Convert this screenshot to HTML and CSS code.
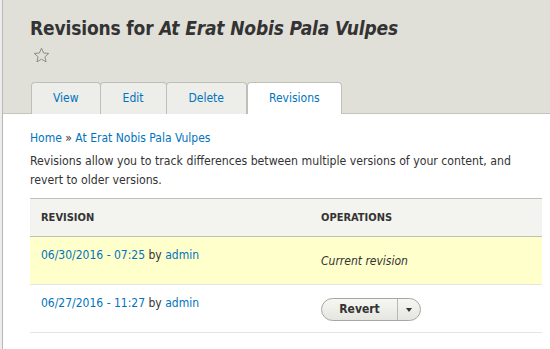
FILE: index.html
```html
<!DOCTYPE html>
<html lang="en">
<head>
    <meta charset="UTF-8">
    <meta name="viewport" content="width=device-width, initial-scale=1.0">
    <title>Revisions for At Erat Nobis Pala Vulpes</title>
    <link rel="stylesheet" href="styles.css">
</head>
<body>
<div class="page">

    <header class="page-header">
        <h1>Revisions for <em>At Erat Nobis Pala Vulpes</em></h1>
        <div class="shortcut">
            <svg width="17" height="17" viewBox="0 0 17 17">
                <path d="M8.5 1.2 L10.6 6 L15.8 6.4 L11.9 9.8 L13.1 14.9 L8.5 12.2 L3.9 14.9 L5.1 9.8 L1.2 6.4 L6.4 6 Z" fill="none" stroke="#8e8e82" stroke-width="1" stroke-linejoin="round"/>
            </svg>
        </div>
        <ul class="tabs">
            <li><a href="#">View</a></li>
            <li><a href="#">Edit</a></li>
            <li><a href="#">Delete</a></li>
            <li class="active"><a href="#">Revisions</a></li>
        </ul>
    </header>

    <main class="content">
        <div class="breadcrumb"><a href="#">Home</a> » <a href="#">At Erat Nobis Pala Vulpes</a></div>
        <p class="help">Revisions allow you to track differences between multiple versions of your content, and revert to older versions.</p>

        <table class="revisions">
            <thead>
                <tr>
                    <th class="col-rev">Revision</th>
                    <th>Operations</th>
                </tr>
            </thead>
            <tbody>
                <tr class="current">
                    <td class="col-rev"><a href="#">06/30/2016 - 07:25</a> by <a href="#">admin</a></td>
                    <td class="ops"><em>Current revision</em></td>
                </tr>
                <tr>
                    <td class="col-rev"><a href="#">06/27/2016 - 11:27</a> by <a href="#">admin</a></td>
                    <td class="ops">
                        <div class="dropbutton">
                            <span class="drop-main">Revert</span>
                            <span class="drop-toggle"><span class="caret"></span></span>
                        </div>
                    </td>
                </tr>
            </tbody>
        </table>
    </main>

</div>
</body>
</html>
```

FILE: styles.css
```css
body {
    margin: 0;
    font-family: "DejaVu Sans Condensed", "DejaVu Sans", sans-serif;
    font-size: 12px;
    color: #333;
    background-color: #ececec;
}

a {
    color: #0074bd;
    text-decoration: none;
}

.page {
    margin-left: 2px;
    min-height: 349px;
    border-left: 1px solid #b8b8b8;
    background-color: #fff;
}

.page-header {
    background-color: #e0e0d8;
    padding: 16px 0 0 27px;
    border-bottom: 1px solid #c4c4bc;
}

h1 {
    margin: 0;
    font-size: 19px;
    line-height: 24px;
    font-weight: bold;
    letter-spacing: -0.15px;
    color: #333;
}

.shortcut {
    margin: 7px 0 0 3px;
    height: 17px;
}

.tabs {
    display: flex;
    list-style: none;
    margin: 18px 0 -1px 0;
    padding: 0 0 0 1px;
}

.tabs li {
    background-color: #ededea;
    border: 1px solid #bfbfba;
    border-bottom: none;
    border-radius: 4px 4px 0 0;
    margin-right: -1px;
}

.tabs li a {
    display: block;
    padding: 0 22px;
    line-height: 31px;
    font-size: 12px;
}

.tabs li:first-child a {
    padding: 0 21px;
}

.tabs li.active {
    background-color: #fff;
    margin-left: 1px;
}

.tabs li.active a {
    padding: 0 21px;
}

.content {
    padding: 15px 8px 16px 27px;
}

.breadcrumb {
    line-height: 18px;
}

.help {
    margin: 5px 20px 8px 0;
    font-size: 12.2px;
    line-height: 19px;
}

.revisions {
    width: 100%;
    border-collapse: collapse;
}

.revisions th {
    text-align: left;
    text-transform: uppercase;
    font-size: 11px;
    font-weight: bold;
    background-color: #f3f3ef;
    border-top: 1px solid #bfbfba;
    border-bottom: 1px solid #bfbfba;
    padding: 0 11px;
    height: 37px;
}

.revisions td {
    vertical-align: top;
    padding: 9px 11px 0 11px;
    line-height: 18px;
    border-bottom: 1px solid #e6e4df;
}

.revisions .col-rev {
    width: 258px;
}

.revisions td.ops {
    padding-top: 13px;
    padding-bottom: 11px;
    line-height: 23px;
}

.revisions tr.current td {
    background-color: #ffffcc;
}

.dropbutton {
    display: inline-flex;
    vertical-align: top;
    height: 21px;
    border: 1px solid #a6a6a6;
    border-radius: 12px;
    background: linear-gradient(#f6f6f3, #e6e6e0);
    font-weight: bold;
    line-height: 21px;
}

.drop-main {
    width: 75px;
    text-align: center;
    border-right: 1px solid #b8b8b8;
}

.drop-toggle {
    width: 22px;
    display: flex;
    align-items: center;
    justify-content: center;
}

.caret {
    width: 0;
    height: 0;
    border-left: 3px solid transparent;
    border-right: 3px solid transparent;
    border-top: 4px solid #333;
}
```
